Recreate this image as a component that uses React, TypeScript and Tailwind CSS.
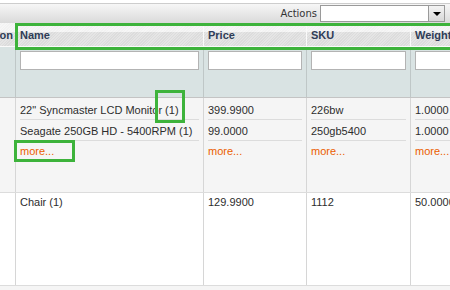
import React from 'react';

const hatch =
  'bg-[linear-gradient(to_bottom,rgba(255,255,255,0.5)_0,rgba(255,255,255,0.5)_40%,rgba(0,0,0,0.04)_40%,rgba(0,0,0,0.04)_100%),repeating-linear-gradient(135deg,#eeeeee_0px,#eeeeee_1px,#e5e5e5_1px,#e5e5e5_2px)]';

type Col = { key: string; label: string; w: string };

const cols: Col[] = [
  { key: 'name', label: 'Name', w: 'w-[188px]' },
  { key: 'price', label: 'Price', w: 'w-[103px]' },
  { key: 'sku', label: 'SKU', w: 'w-[104px]' },
  { key: 'weight', label: 'Weight', w: 'w-[60px]' },
];

type Item = { name: string; price: string; sku: string; weight: string };

const rows: { bg: string; h: string; items: Item[]; more: boolean }[] = [
  {
    bg: 'bg-[#f5f5f5]',
    h: 'h-[95px]',
    items: [
      { name: '22" Syncmaster LCD Monitor (1)', price: '399.9900', sku: '226bw', weight: '1.0000' },
      { name: 'Seagate 250GB HD - 5400RPM (1)', price: '99.0000', sku: '250gb5400', weight: '1.0000' },
    ],
    more: true,
  },
  {
    bg: 'bg-white',
    h: 'h-[93px]',
    items: [{ name: 'Chair (1)', price: '129.9900', sku: '1112', weight: '50.0000' }],
    more: false,
  },
];

function Cell({ row, col }: { row: (typeof rows)[number]; col: Col }) {
  return (
    <div
      className={`${col.w} shrink-0 border-r border-[#d6d6d6] px-[4px] overflow-hidden ${
        row.more ? 'pt-[1px]' : ''
      }`}
    >
      {row.items.map((it, i) => (
        <div
          key={i}
          className={`whitespace-nowrap leading-[17px] ${
            row.more ? 'h-[21px] pt-[3px] border-b border-[#dcdcdc]' : 'pt-[1px]'
          }`}
        >
          {it[col.key as keyof Item]}
        </div>
      ))}
      {row.more && <div className="h-[20px] leading-[20px] text-[#eb5e00]">more...</div>}
    </div>
  );
}

export default function App() {
  return (
    <div className="relative w-[450px] h-[290px] overflow-hidden bg-white font-['Liberation_Sans',Arial,sans-serif] text-[11px] text-[#2d2d2d]">
      {/* toolbar */}
      <div className="mt-[3px] h-[20px] border-t border-[#cdcdcd] bg-gradient-to-b from-[#f6f6f6] to-[#dadada] flex items-center justify-end pr-[5px]">
        <span className="mr-[3px] text-[#333] font-['DejaVu_Sans',sans-serif] text-[10px]">Actions</span>
        <div className="w-[125px] h-[17px] bg-white border border-[#9a9a9a] flex justify-end">
          <div className="w-[16px] h-full border-l border-[#9a9a9a] bg-gradient-to-b from-[#f4f4f4] to-[#d8d8d8] flex items-center justify-center">
            <div className="w-0 h-0 border-l-[4px] border-r-[4px] border-t-[4px] border-l-transparent border-r-transparent border-t-black" />
          </div>
        </div>
      </div>

      {/* header */}
      <div className={`flex h-[24px] ${hatch} border-b border-[#fafafa]`}>
        <div className="w-[16px] shrink-0 border-r border-[#c9c9c9] overflow-hidden flex justify-end items-end pb-[3px] pr-[2px] font-bold text-[#2f3d57]">
          <span className="whitespace-nowrap">Action</span>
        </div>
        {cols.map((c) => (
          <div
            key={c.key}
            className={`${c.w} shrink-0 border-r border-[#fafafa] px-[4px] pb-[3px] flex items-end font-bold text-[#2f3d57] whitespace-nowrap overflow-hidden`}
          >
            {c.label}
          </div>
        ))}
      </div>

      {/* filters */}
      <div className="flex h-[51px] bg-[#d9e3e3] border-b border-[#c4c4c4]">
        <div className="w-[16px] shrink-0 border-r border-[#bfc7c7]" />
        {cols.map((c) => (
          <div key={c.key} className={`${c.w} shrink-0 border-r border-[#bfc7c7] px-[4px] pt-[4px]`}>
            <div className="h-[19px] w-full bg-white border border-[#b3b3b3]" />
          </div>
        ))}
      </div>

      {/* rows */}
      {rows.map((r, i) => (
        <div key={i} className={`flex ${r.h} ${r.bg} border-b border-[#dcdcdc]`}>
          <div className="w-[16px] shrink-0 border-r border-[#d6d6d6]" />
          {cols.map((c) => (
            <Cell key={c.key} row={r} col={c} />
          ))}
        </div>
      ))}
      <div className="h-[10px] bg-[#f5f5f5]" />

      {/* annotation boxes */}
      <div className="absolute left-[15px] top-[23px] w-[440px] h-[27px] border-[3px] border-[#3db33b]" />
      <div className="absolute left-[155px] top-[90px] w-[30px] h-[33px] border-[3px] border-[#3db33b]" />
      <div className="absolute left-[14px] top-[140px] w-[61px] h-[22px] border-[3px] border-[#3db33b]" />
    </div>
  );
}
